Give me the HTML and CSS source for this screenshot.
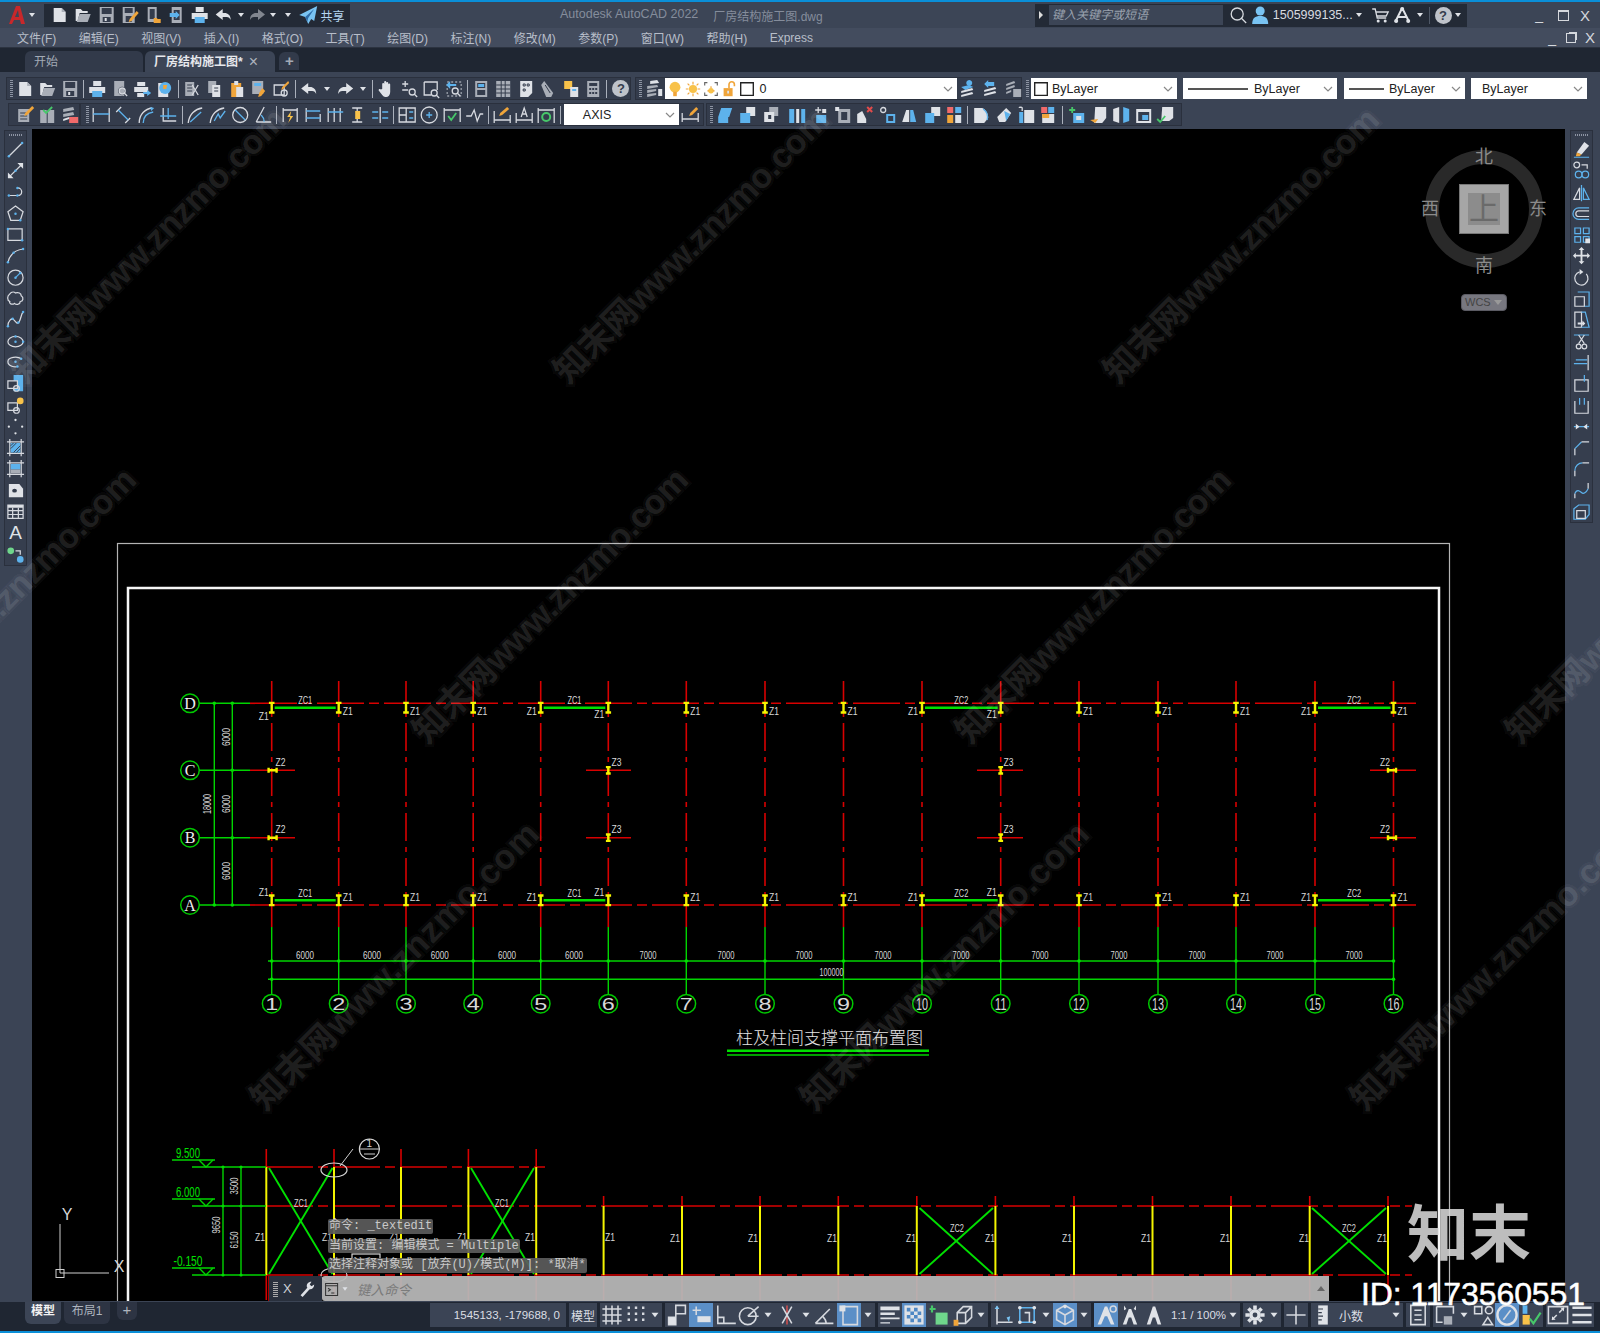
FILE: index.html
```html
<!DOCTYPE html>
<html lang="zh-CN">
<head>
<meta charset="utf-8">
<title>Autodesk AutoCAD 2022 - 厂房结构施工图.dwg</title>
<link rel="stylesheet" href="styles.css">
</head>
<body>
<svg class="defs" aria-hidden="true">
<symbol id="new" viewBox="0 0 20 20"><path class="fw" d="M4 3h8l4 4v10H4z"/><path class="fg" d="M12 3l4 4h-4z"/></symbol>
<symbol id="open" viewBox="0 0 20 20"><path class="fw" d="M3 4h5l2 2h5v2H7l-2 8H3z"/><path class="fg" d="M7 9h11l-3 8H4z"/></symbol>
<symbol id="save" viewBox="0 0 20 20"><path class="fg" d="M3 2h14v16H3z"/><path class="fk" d="M5 3h10v6H5zM6 12h8v5H6z"/><path class="fw" d="M8 13h2v3H8z"/></symbol>
<symbol id="saveas" viewBox="0 0 20 20"><path class="fg" d="M3 2h12v16H3z"/><path class="fk" d="M5 3h8v5H5zM6 11h6v6H6z"/><path class="fo" d="M17 6l2 2-7 8-3 1 1-3z"/></symbol>
<symbol id="sheet" viewBox="0 0 20 20"><path class="fg" d="M4 2h9v15H4z"/><path class="fk" d="M6 4h5v10H6z"/><path class="fo" d="M10 13h3l1 1h3v4h-7z"/></symbol>
<symbol id="phone" viewBox="0 0 20 20"><path class="fg" d="M5 2h10v16H5z"/><path class="fk" d="M7 5h6v10H7z"/><path class="fb" d="M3 8h6V6l4 4-4 4v-2H3z"/></symbol>
<symbol id="print" viewBox="0 0 20 20"><path class="fw" d="M6 2h8v5H6zM2 8h16v6H2z"/><path class="fb" d="M5 12h10v6H5z"/></symbol>
<symbol id="prev" viewBox="0 0 20 20"><path class="fg" d="M4 2h10v15H4z"/><circle class="d" cx="12" cy="12" r="3.5"/><circle class="l" cx="12" cy="12" r="3"/><path class="l" d="M14 14l3 3"/></symbol>
<symbol id="plot" viewBox="0 0 20 20"><path class="fw" d="M5 3h8v4H5zM2 8h14v5H2z"/><path class="fw" d="M5 14h7v4H5z"/><path class="fb" d="M11 13h4v-2l4 3-4 3v-2h-4z"/></symbol>
<symbol id="globe" viewBox="0 0 20 20"><path class="fw" d="M4 4h10v14H4z"/><circle class="fb" cx="11" cy="9" r="6"/><path class="fo" d="M9 6h4l-1 4h-3z"/></symbol>
<symbol id="cut" viewBox="0 0 20 20"><path class="fg" d="M3 3h9v14H3z"/><path class="k" d="M5 6h5M5 9h5M5 12h5"/><path class="l" d="M10 6l6 10M16 6l-6 10"/></symbol>
<symbol id="copy" viewBox="0 0 20 20"><path class="fg" d="M4 2h8v12H4z"/><path class="fw" d="M8 6h8v12H8z"/><path class="k" d="M10 9h4M10 12h4"/></symbol>
<symbol id="paste" viewBox="0 0 20 20"><path class="fo" d="M4 4h10v14H4z"/><path class="fw" d="M7 2h4v4H7zM9 8h7v10H9z"/></symbol>
<symbol id="match" viewBox="0 0 20 20"><path class="fg" d="M3 2h11v13H3z"/><path class="fb" d="M5 4h7v3H5z"/><path class="fo" d="M13 9l3 3-4 5-3 1 1-4z"/></symbol>
<symbol id="block" viewBox="0 0 20 20"><path class="l" d="M3 6h10v10H3z"/><circle class="l" cx="13" cy="14" r="3"/><path class="fo" d="M17 2l1 2-6 6-2 1 1-3z"/></symbol>
<symbol id="undo" viewBox="0 0 20 20"><path class="fw" d="M9 4L2 9.500l7 5.500v-3h4c2 0 3 1 4 3 0-5-3-7-6-7H9z"/></symbol>
<symbol id="redo" viewBox="0 0 20 20"><path class="fw" d="M11 4l7 5.500-7 5.500v-3H7c-2 0-3 1-4 3 0-5 3-7 6-7h2z"/></symbol>
<symbol id="caret" viewBox="0 0 12 20"><path class="fw" d="M3 8h6l-3 4z"/></symbol>
<symbol id="chev" viewBox="0 0 12 12"><path class="ch" d="M2 4l4 4 4-4"/></symbol>
<symbol id="hand" viewBox="0 0 20 20"><path class="fw" d="M6 10V5a1 1 0 012 0V3a1 1 0 012 0v1a1 1 0 012 0v1.500a1 1 0 012 0V13c0 3-2 5-4 5H9c-1 0-2-1-3-2l-3.500-4.500c-.5-1 1-2 2-1z"/></symbol>
<symbol id="zoomr" viewBox="0 0 20 20"><path class="l" d="M6 2v6M3 5h6M3 11h6"/><circle class="l" cx="13" cy="13" r="3"/><path class="l" d="M15 15l3 3"/></symbol>
<symbol id="zoomw" viewBox="0 0 20 20"><path class="l" d="M3 3h13v8M3 3v13h7"/><circle class="l" cx="13" cy="14" r="3"/><path class="l" d="M15 16l3 3"/></symbol>
<symbol id="zoomp" viewBox="0 0 20 20"><path class="da" d="M3 3h14v14H3z"/><path class="fb" d="M2 6l4-4v3h6v2H6v3z"/><circle class="l" cx="11" cy="12" r="3"/><path class="l" d="M13 14l3 3"/></symbol>
<symbol id="propp" viewBox="0 0 20 20"><path class="fg" d="M4 2h12v16H4z"/><path class="fk" d="M6 4h8v5H6z"/><path class="fb" d="M7 5h6v3H7z"/><path class="fk" d="M6 11h8v5H6z"/></symbol>
<symbol id="dcent" viewBox="0 0 20 20"><path class="fg" d="M3 2h14v16H3z"/><path class="k" d="M8 2v16M12 2v16M3 6h14M3 10h14M3 14h14"/></symbol>
<symbol id="tool" viewBox="0 0 20 20"><path class="fw" d="M4 2h12v12l-4 4H4z"/><path class="k" d="M7 5h2v2H7zM7 10h2v2H7zM11 5h2v2h-2z"/></symbol>
<symbol id="sheet2" viewBox="0 0 20 20"><path class="fg" d="M6 2l9 12-2 4H8L3 6z"/><path class="k" d="M7 6l5 8"/></symbol>
<symbol id="markup" viewBox="0 0 20 20"><path class="fy" d="M3 2h8v8H3z"/><path class="fw" d="M9 8h8v10H9z"/><path class="fb" d="M11 10h4v2h-4z"/></symbol>
<symbol id="calc" viewBox="0 0 20 20"><path class="fg" d="M4 2h12v16H4z"/><path class="fk" d="M6 4h8v3H6zM6 9h2v2H6zM9 9h2v2H9zM12 9h2v2h-2zM6 13h2v2H6zM9 13h2v2H9zM12 13h2v2h-2z"/></symbol>
<symbol id="layer" viewBox="0 0 20 20"><path class="fw" d="M6 2l7-1 2 3-9 1z"/><path class="fg" d="M3 7l10-1 1 2-11 2zM3 11l9-1v2l-9 2zM3 15l9-1v2l-9 2z"/><path class="fk" d="M13 9h6v9h-6z"/><path class="fw" d="M14 10h4v7h-4z"/></symbol>
<symbol id="bulb" viewBox="0 0 20 20"><circle class="fy" cx="10" cy="8" r="6"/><path class="fo" d="M8 13h4v5H8z"/></symbol>
<symbol id="sun" viewBox="0 0 20 20"><circle class="fy" cx="10" cy="10" r="4.500"/><path class="o" d="M10 2v3M10 15v3M2 10h3M15 10h3M4 4l2 2M14 14l2 2M4 16l2-2M14 6l2-2"/></symbol>
<symbol id="frozen" viewBox="0 0 20 20"><path class="mk" d="M3 6V3h3M14 3h3v3M3 14v3h3M14 17h3v-3"/><circle class="fy" cx="10" cy="12" r="3"/><path class="o" d="M10 7v2M6 12h2M12 12h2"/></symbol>
<symbol id="lock" viewBox="0 0 20 20"><path class="fo" d="M4 9h10v9H4z"/><path class="lo" d="M10 9V5a3 3 0 016 0v2"/><path class="fw" d="M8 12h2v3H8z"/></symbol>
<symbol id="wsq" viewBox="0 0 20 20"><path class="mk2" d="M3 3h14v14H3z"/></symbol>
<symbol id="lmove" viewBox="0 0 20 20"><path class="fb" d="M3 8l8-2 4 2-8 3z"/><path class="fb" d="M11 1a3 3 0 10.100 0z"/><path class="fw" d="M3 12l11-3 1 2-12 3zM3 16l11-3 1 2-12 3z"/></symbol>
<symbol id="lprev" viewBox="0 0 20 20"><path class="fb" d="M3 5l4-4v2h6v4H7v2z"/><path class="fw" d="M3 11l11-3 1 2-12 3zM3 15l11-3 1 2-12 3z"/></symbol>
<symbol id="llock" viewBox="0 0 20 20"><path class="fg" d="M3 5l8-3 1 2-9 3zM3 9l8-3 1 2-9 3zM3 13l5-2v2l-5 2z"/><path class="fg" d="M10 10h8v8h-8z"/><path class="k" d="M12 10V8a2 2 0 014 0v2"/></symbol>
<symbol id="note" viewBox="0 0 20 20"><path class="fg" d="M3 4h11v13H3z"/><path class="k" d="M5 8h7M5 11h7M5 14h7"/><path class="fo" d="M17 1l2 2-7 7-3 1 1-3z"/></symbol>
<symbol id="notechk" viewBox="0 0 20 20"><path class="fg" d="M3 5h14v13H3z"/><path class="k" d="M10 5v13"/><path class="gr" d="M6 5l3 3 6-6"/></symbol>
<symbol id="notex" viewBox="0 0 20 20"><path class="fg" d="M3 4l10-2 1 3-11 2zM3 9l10-2 1 3-11 2z"/><path class="fr" d="M9 12h9v6H9z"/><path class="fw" d="M3 14l6-2v2l-6 2z"/></symbol>
<symbol id="dimlin" viewBox="0 0 20 20"><path class="l" d="M2 3v14M18 3v14"/><path class="bl" d="M2 9h16"/></symbol>
<symbol id="dimali" viewBox="0 0 20 20"><path class="l" d="M3 7l5-5M12 18l5-5"/><path class="bl" d="M5 5l10 10"/></symbol>
<symbol id="dimarc" viewBox="0 0 20 20"><path class="l" d="M3 18C3 9 9 4 16 3"/><path class="bl" d="M7 18C7 12 11 8 17 7"/><path class="fb" d="M14 2l4 1-3 3z"/></symbol>
<symbol id="dimord" viewBox="0 0 20 20"><path class="l" d="M5 3v13h13"/><path class="bl" d="M10 3v11M2 11h16"/></symbol>
<symbol id="dimrad" viewBox="0 0 20 20"><path class="l" d="M2 18C3 9 9 4 16 3"/><path class="bl" d="M4 17L15 7"/></symbol>
<symbol id="dimjog" viewBox="0 0 20 20"><path class="l" d="M2 18C3 9 9 4 16 3"/><path class="bl" d="M6 16l4-7 2 4 5-7"/></symbol>
<symbol id="dimdia" viewBox="0 0 20 20"><circle class="l" cx="10" cy="10" r="7.500"/><path class="bl" d="M5 5l10 10"/></symbol>
<symbol id="dimang" viewBox="0 0 20 20"><path class="l" d="M3 17h15M3 17L11 2"/><path class="bl" d="M11 17c0-3-1-5-3-7"/></symbol>
<symbol id="dimqk" viewBox="0 0 20 20"><path class="l" d="M3 3v14M17 3v14M3 5h14"/><path class="fy" d="M11 6l-4 6h3l-2 6 5-7h-3z"/></symbol>
<symbol id="dimbase" viewBox="0 0 20 20"><path class="l" d="M3 3v14M17 9v8"/><path class="bl" d="M3 6h14M3 13h14"/></symbol>
<symbol id="dimcont" viewBox="0 0 20 20"><path class="l" d="M3 3v14M9 3v14M15 3v14"/><path class="bl" d="M3 7h15"/></symbol>
<symbol id="dimtxt" viewBox="0 0 20 20"><path class="l" d="M5 3h10M5 17h10M10 3v14"/><path class="fy" d="M8 6h5v8H8z"/></symbol>
<symbol id="dimspc" viewBox="0 0 20 20"><path class="l" d="M10 2v16"/><path class="bl" d="M2 7h6M12 7h6M2 13h6M12 13h6"/></symbol>
<symbol id="tol" viewBox="0 0 20 20"><path class="l" d="M2 3h16v14H2zM9 3v14M2 10h7"/><path class="bl" d="M12 7h4M12 13h4"/></symbol>
<symbol id="cmark" viewBox="0 0 20 20"><circle class="l" cx="10" cy="10" r="8"/><path class="bl" d="M10 7v6M7 10h6"/></symbol>
<symbol id="insp" viewBox="0 0 20 20"><path class="l" d="M2 3v14M18 3v14M2 5h16"/><path class="gr" d="M6 11l3 4 5-7"/></symbol>
<symbol id="jog" viewBox="0 0 20 20"><path class="l" d="M2 11l5 0 3-6 3 11 3-7h3"/></symbol>
<symbol id="dted" viewBox="0 0 20 20"><path class="l" d="M2 18V6M18 18V10M2 15h16"/><path class="fo" d="M15 2l2 2-7 6-3 1 1-3z"/></symbol>
<symbol id="dtxa" viewBox="0 0 20 20"><path class="l" d="M2 18V8M18 18V8M2 15h16M7 12l3-9 3 9M8 9h4"/></symbol>
<symbol id="dupd" viewBox="0 0 20 20"><path class="l" d="M2 18V3M18 18V3M2 5h16"/><circle class="grw" cx="10" cy="12" r="4"/></symbol>
<symbol id="dsty" viewBox="0 0 20 20"><path class="l" d="M2 17V8M18 17V8M2 14h16"/><path class="fo" d="M16 2l2 2-6 6-3 1 1-3z"/></symbol>
<symbol id="s1" viewBox="0 0 20 20"><path class="fb" d="M6 3h11l-3 9H3z"/><path class="fb" d="M3 12h10v6H3z"/></symbol>
<symbol id="s2" viewBox="0 0 20 20"><path class="fw" d="M9 2h9v9H9z"/><path class="fb" d="M3 8h10v10H3z"/></symbol>
<symbol id="s3" viewBox="0 0 20 20"><path class="fg" d="M9 2h9v9H9z"/><path class="fw" d="M4 7h10v10H4z"/><path class="fk" d="M8 10h3v4H8z"/></symbol>
<symbol id="s4" viewBox="0 0 20 20"><path class="fb" d="M2 4h5v14H2z"/><path class="fw" d="M9 4h3v14H9z"/><path class="fb" d="M14 4h4v14h-4z"/></symbol>
<symbol id="s5" viewBox="0 0 20 20"><path class="l" d="M8 2v6M5 5h6"/><path class="fw" d="M12 4h4v4h-4z"/><path class="fb" d="M6 10h10v8H6z"/></symbol>
<symbol id="s6" viewBox="0 0 20 20"><path class="fg" d="M6 4h12v14H6z"/><path class="fk" d="M9 7h6v8H9z"/><path class="fw" d="M3 2h4v4H3z"/></symbol>
<symbol id="s7" viewBox="0 0 20 20"><path class="fw" d="M3 18V9l5-3 4 8v4z"/><path class="x" d="M13 2l5 5M18 2l-5 5"/></symbol>
<symbol id="s8" viewBox="0 0 20 20"><circle class="l" cx="6" cy="5" r="2.500"/><path class="fb" d="M9 9h9v9H9z"/><path class="fk" d="M11 11h5v5h-5z"/></symbol>
<symbol id="s9" viewBox="0 0 20 20"><path class="fw" d="M3 17L7 5h3v12z"/><path class="fb" d="M11 5h3l3 12h-6z"/></symbol>
<symbol id="s10" viewBox="0 0 20 20"><path class="fw" d="M9 2h9v9H9z"/><path class="fb" d="M3 8h9v10H3z"/></symbol>
<symbol id="s11" viewBox="0 0 20 20"><path class="fr" d="M3 2h6v6H3z"/><path class="fb" d="M11 2h6v6h-6z"/><path class="fo" d="M3 10h6v8H3z"/><path class="fw" d="M11 10h6v8h-6z"/></symbol>
<symbol id="s12" viewBox="0 0 20 20"><path class="fw" d="M3 3h8c4 2 6 6 6 10l-4 5H3z"/><path class="bl" d="M12 4c3 2 5 6 4 11"/></symbol>
<symbol id="s13" viewBox="0 0 20 20"><path class="fw" d="M3 12l9-9 5 5-6 9H5z"/><path class="fb" d="M10 6l6 3-4 7z"/></symbol>
<symbol id="s14" viewBox="0 0 20 20"><path class="l" d="M3 3c0-1 3-1 3 0v3"/><path class="fb" d="M3 7h4v11H3z"/><path class="fw" d="M8 5h10v13H8z"/></symbol>
<symbol id="s15" viewBox="0 0 20 20"><path class="fr" d="M3 2h6v6H3z"/><path class="fb" d="M10 2h6v6h-6z"/><path class="fw" d="M4 9h12v9H4z"/><path class="fo" d="M4 9h7v4H4z"/></symbol>
<symbol id="s16" viewBox="0 0 20 20"><path class="gr" d="M3 5h6M6 2v6"/><path class="fb" d="M7 8h11v10H7z"/><path class="fw" d="M10 11h5v4h-5z"/></symbol>
<symbol id="s17" viewBox="0 0 20 20"><path class="fw" d="M7 2h11v11l-4 5H6z"/><path class="fo" d="M2 15l8-1-3 4z"/></symbol>
<symbol id="s18" viewBox="0 0 20 20"><path class="fw" d="M2 4l6-2v16l-6-2z"/><path class="fb" d="M12 2l6 2v12l-6 2z"/></symbol>
<symbol id="s19" viewBox="0 0 20 20"><path class="fw" d="M3 4h15v14H3z"/><path class="fk" d="M5 7h11v9H5z"/><path class="fb" d="M9 10h6v5H9z"/></symbol>
<symbol id="s20" viewBox="0 0 20 20"><path class="fw" d="M7 2h11v11l-4 3H6z"/><path class="gr" d="M2 14l3 3 5-6"/></symbol>
<symbol id="lline" viewBox="0 0 20 20"><path class="l" d="M3 17L17 3"/><circle class="dot" cx="3" cy="17" r="1.300"/><circle class="dot" cx="17" cy="3" r="1.300"/></symbol>
<symbol id="lxline" viewBox="0 0 20 20"><path class="l" d="M4 16L16 4"/><path class="fw" d="M12 2h6v6zM2 12l6 6H2z"/><circle class="dot" cx="10" cy="10" r="1.300"/></symbol>
<symbol id="lpline" viewBox="0 0 20 20"><path class="l" d="M3 13h9c6 0 6-8 0-8"/><circle class="dot" cx="3" cy="13" r="1.300"/><circle class="dot" cx="12" cy="13" r="1.300"/><circle class="dot" cx="12" cy="5" r="1.300"/></symbol>
<symbol id="lpoly" viewBox="0 0 20 20"><path class="l" d="M10 2l8 6-3 9H5L2 8z"/><circle class="dot" cx="10" cy="10" r="1.300"/><circle class="dot" cx="15" cy="17" r="1.300"/></symbol>
<symbol id="lrect" viewBox="0 0 20 20"><path class="l" d="M2 4h15v12H2z"/><circle class="dot" cx="2" cy="4" r="1.300"/><circle class="dot" cx="17" cy="16" r="1.300"/></symbol>
<symbol id="larc" viewBox="0 0 20 20"><path class="l" d="M2 17C4 9 10 4 18 3"/><circle class="dot" cx="2" cy="17" r="1.300"/><circle class="dot" cx="18" cy="3" r="1.300"/><circle class="dot" cx="8" cy="7" r="1.300"/></symbol>
<symbol id="lcirc" viewBox="0 0 20 20"><circle class="l" cx="10" cy="10" r="8"/><path class="bl" d="M10 10l5-5"/><circle class="dot" cx="10" cy="10" r="1.300"/><circle class="dot" cx="15" cy="5" r="1.300"/></symbol>
<symbol id="lcloud" viewBox="0 0 20 20"><path class="l" d="M4 5c2-3 5-2 6-1 3-1 6 0 6 3 3 2 2 6-1 6 0 3-4 4-6 2-3 2-6 0-5-2-3-1-3-6 0-8z"/></symbol>
<symbol id="lspl" viewBox="0 0 20 20"><path class="l" d="M2 17c0-6 4-9 6-7s4 6 6 2 2-8 4-10"/><circle class="dot" cx="2" cy="17" r="1.300"/><circle class="dot" cx="7" cy="9" r="1.300"/><circle class="dot" cx="13" cy="13" r="1.300"/><circle class="dot" cx="18" cy="2" r="1.300"/></symbol>
<symbol id="lell" viewBox="0 0 20 20"><ellipse class="l" cx="10" cy="10" rx="8" ry="5.500"/><circle class="dot" cx="10" cy="10" r="1.300"/><circle class="dot" cx="18" cy="10" r="1.300"/><circle class="dot" cx="10" cy="4.500" r="1.300"/></symbol>
<symbol id="lella" viewBox="0 0 20 20"><path class="l" d="M16 6c-4-3-14-2-14 3s8 6 10 5"/><circle class="dot" cx="10" cy="9" r="1.300"/><circle class="dot" cx="16" cy="6" r="1.300"/><circle class="dot" cx="12" cy="14" r="1.300"/></symbol>
<symbol id="lins" viewBox="0 0 20 20"><path class="fb" d="M8 1h10v17H8z"/><path class="fk" d="M2 7h10v8H2z"/><path class="l" d="M2 7h10v8H2z"/><circle class="l" cx="11" cy="15" r="3"/></symbol>
<symbol id="lblk" viewBox="0 0 20 20"><path class="l" d="M2 7h10v8H2z"/><circle class="l" cx="11" cy="15" r="3"/><circle class="fy" cx="15" cy="5" r="3.500"/></symbol>
<symbol id="lpts" viewBox="0 0 20 20"><circle class="fw" cx="10" cy="3" r="1.200"/><circle class="fw" cx="3" cy="10" r="1.200"/><circle class="fw" cx="10" cy="17" r="1.200"/><circle class="fw" cx="17" cy="10" r="1.200"/></symbol>
<symbol id="lhat" viewBox="0 0 20 20"><path class="l" d="M1 4h18M1 16h18M4 1v18M16 1v18"/><path class="fb" d="M5 5h10v10H5z"/><path class="k" d="M5 11l6-6M8 15l7-7M5 8l3-3M11 15l4-4"/></symbol>
<symbol id="lgrad" viewBox="0 0 20 20"><path class="l" d="M1 4h18M1 16h18M4 1v18M16 1v18"/><path class="fb" d="M5 5h10v6H5z"/><path class="fg" d="M5 11h10v4H5z"/></symbol>
<symbol id="lreg" viewBox="0 0 20 20"><path class="fw" d="M3 3h11l4 5v9H3z"/><ellipse class="fk" cx="9" cy="10" rx="2.500" ry="2"/></symbol>
<symbol id="ltab" viewBox="0 0 20 20"><path class="fw" d="M2 3h16v3H2z"/><path class="l" d="M2 3h16v14H2zM2 9h16M2 13h16M7 6v11M13 6v11"/></symbol>
<symbol id="ladd" viewBox="0 0 20 20"><circle class="fgr" cx="5" cy="6" r="3.500"/><circle class="fb" cx="15" cy="15" r="3.500"/><path class="l" d="M10 6h5v4"/></symbol>
<symbol id="rer" viewBox="0 0 20 20"><path class="fw" d="M13 2l5 4-8 9-5-2z"/><path class="fo" d="M5 13l5 2-2 2H4z"/><path class="bl" d="M2 18h16"/></symbol>
<symbol id="rcopy" viewBox="0 0 20 20"><circle class="l" cx="5" cy="4" r="3"/><path class="l" d="M10 4h6v4"/><circle class="bl" cx="7" cy="14" r="3.500"/><circle class="bl" cx="14" cy="14" r="3.500"/></symbol>
<symbol id="rmir" viewBox="0 0 20 20"><path class="l" d="M2 17L8 5v12z"/><path class="bl" d="M12 5l6 12h-6zM10 2v17"/></symbol>
<symbol id="roff" viewBox="0 0 20 20"><path class="bl" d="M18 4H7a6 6 0 000 12h11"/><path class="l" d="M18 7H7a3 3 0 000 6h11"/></symbol>
<symbol id="rarr" viewBox="0 0 20 20"><path class="bl" d="M3 3h6v6H3zM12 3h6v6h-6zM3 12h6v6H3z"/><path class="bl" d="M12 12h6v6h-6z"/><path class="fw" d="M14 14h5v5h-5z"/></symbol>
<symbol id="rmov" viewBox="0 0 20 20"><path class="fw" d="M10 1l3 3h-2v5h5V7l3 3-3 3v-2h-5v5h2l-3 3-3-3h2v-5H4v2l-3-3 3-3v2h5V4H7z"/></symbol>
<symbol id="rrot" viewBox="0 0 20 20"><path class="l" d="M8 4a7 7 0 107 2"/><path class="fw" d="M8 1l4 3-4 3z"/></symbol>
<symbol id="rsca" viewBox="0 0 20 20"><path class="bl" d="M6 3h12v15H13"/><path class="l" d="M3 8h10v10H3z"/></symbol>
<symbol id="rstr" viewBox="0 0 20 20"><path class="l" d="M3 2h7v16H3z"/><path class="bl" d="M10 2h4l4 16h-8"/><path class="fw" d="M6 13h5v-2l3 3-3 3v-2H6z"/></symbol>
<symbol id="rtrim" viewBox="0 0 20 20"><path class="bl" d="M2 3h16"/><path class="l" d="M7 3l6 9M13 3l-6 9"/><circle class="l" cx="7" cy="15" r="2.500"/><circle class="l" cx="13" cy="15" r="2.500"/></symbol>
<symbol id="rext" viewBox="0 0 20 20"><path class="l" d="M17 2v16"/><path class="bl" d="M2 11h14M4 7h12"/></symbol>
<symbol id="rbrk" viewBox="0 0 20 20"><path class="l" d="M3 6h14v12H3z"/><path class="bl" d="M13 1v7"/></symbol>
<symbol id="rbrk2" viewBox="0 0 20 20"><path class="l" d="M3 5v13h14V5"/><path class="bl" d="M8 2v7M13 2v7"/></symbol>
<symbol id="rjoin" viewBox="0 0 20 20"><path class="bl" d="M2 10h16"/><path class="fw" d="M4 7l4 3-4 3zM16 7l-4 3 4 3z"/></symbol>
<symbol id="rcham" viewBox="0 0 20 20"><path class="l" d="M3 18V11"/><path class="bl" d="M3 11l7-7"/><path class="l" d="M10 4h8"/></symbol>
<symbol id="rfil" viewBox="0 0 20 20"><path class="l" d="M3 18v-6"/><path class="bl" d="M3 12c0-5 4-8 8-8"/><path class="l" d="M11 4h7"/></symbol>
<symbol id="rblend" viewBox="0 0 20 20"><path class="l" d="M3 18v-5M17 2v6"/><path class="bl" d="M3 13c2-5 5-3 7-1s5 0 7-4"/></symbol>
<symbol id="rexp" viewBox="0 0 20 20"><path class="bl" d="M2 7l5-4h11v10l-4 5H2z"/><path class="l" d="M5 9h9v8H5z"/></symbol>
<symbol id="search" viewBox="0 0 20 20"><circle class="l" cx="9" cy="9" r="6"/><path class="l" d="M13 13l5 5"/></symbol>
<symbol id="user" viewBox="0 0 20 20"><circle class="fbl" cx="10" cy="6" r="4.500"/><path class="fbl" d="M2 19c0-6 3-8 8-8s8 2 8 8z"/></symbol>
<symbol id="cart" viewBox="0 0 20 20"><path class="l" d="M2 4h3l2 9h9M6 7h12l-2 4H7"/><circle class="fw" cx="8" cy="16" r="1.500"/><circle class="fw" cx="15" cy="16" r="1.500"/></symbol>
<symbol id="alogo" viewBox="0 0 20 20"><path class="l2" d="M10 3L3 17M10 3l7 14M6 12h8"/><circle class="fw" cx="10" cy="4" r="2"/><circle class="fw" cx="4" cy="16" r="2"/><circle class="fw" cx="16" cy="16" r="2"/></symbol>
<symbol id="share" viewBox="0 0 20 20"><path class="fbl" d="M19 1L1 10l6 2 3 7 3-5 3 2z"/><path class="fk2" d="M7 12l9-8-6 9-1 4z"/></symbol>
<symbol id="acad" viewBox="0 0 18 22"><path class="fred" d="M8 2h4l5 18h-4l-1-4H6l-2 4H1zM10 6L7 13h4z"/></symbol>
<symbol id="tty" viewBox="0 0 20 20"><path class="tk" d="M2 3h15v15H2zM2 6h15M5 9l3 2-3 2M9 15h4"/></symbol>
<symbol id="wrench" viewBox="0 0 20 20"><path class="l3" d="M4 18l8-9"/><path class="fw" d="M10 8c-1-3 1-6 5-6l-2 3 2 2 3-2c0 4-3 6-6 5z"/></symbol>
<symbol id="grid" viewBox="0 0 20 20"><path class="l" d="M5 2v16M10 2v16M15 2v16M2 5h16M2 10h16M2 15h16"/></symbol>
<symbol id="dots" viewBox="0 0 20 20"><path class="dash" d="M4 3v14M10 3v14M16 3v14"/></symbol>
<symbol id="infer" viewBox="0 0 20 20"><path class="l" d="M9 2h8v7H9zM9 5v7H3v6h6v-6"/><path class="fw" d="M3 12h6v6H3z"/></symbol>
<symbol id="dyn" viewBox="0 0 20 20"><path class="l" d="M6 3v7M3 6h7"/><path class="fw" d="M7 11h11v5H7z"/></symbol>
<symbol id="ortho" viewBox="0 0 20 20"><path class="l" d="M4 2v15h15M4 12h5v5"/></symbol>
<symbol id="polar" viewBox="0 0 20 20"><circle class="l" cx="9" cy="11" r="7"/><path class="l" d="M9 11l9-8M9 11h9"/></symbol>
<symbol id="osnap" viewBox="0 0 20 20"><path class="x2" d="M10 2v16"/><path class="l" d="M6 3l8 14M14 3L6 17"/></symbol>
<symbol id="otrk" viewBox="0 0 20 20"><path class="l" d="M2 17L14 5M2 17h15"/><path class="l" d="M11 17c0-3-1-4-3-6"/></symbol>
<symbol id="dynin" viewBox="0 0 20 20"><path class="l" d="M5 3h12v15H5z"/><path class="fw" d="M2 2h5v5H2z"/></symbol>
<symbol id="lwt" viewBox="0 0 20 20"><path class="fw" d="M2 3h16v3H2zM2 8h12v2H2zM2 12h16v1.500H2zM2 16h8v1H2z"/></symbol>
<symbol id="transp" viewBox="0 0 20 20"><path class="fw" d="M2 2h16v16H2z"/><path class="fbd" d="M4 4h3v3H4zM10 4h3v3h-3zM7 7h3v3H7zM13 7h3v3h-3zM4 10h3v3H4zM10 10h3v3h-3zM7 13h3v3H7zM13 13h3v3h-3z"/></symbol>
<symbol id="qsel" viewBox="0 0 20 20"><path class="gr" d="M3 5h5M5 2v6"/><path class="fgr" d="M8 8h10v10H8z"/></symbol>
<symbol id="cyc" viewBox="0 0 20 20"><path class="l" d="M6 8l5-5h7v9l-5 5H6zM6 8h7v9M13 8l5-5"/><path class="fo" d="M3 14h4v5H3z"/></symbol>
<symbol id="axes" viewBox="0 0 20 20"><path class="l" d="M5 18V3M5 16h13"/><path class="fbl" d="M3 5l2-3 2 3zM13 12l3-1-1 5z"/></symbol>
<symbol id="gizmo" viewBox="0 0 20 20"><path class="bl" d="M4 4h12v12H4z"/><path class="dot2" d="M4 4h.100M16 4h.100M4 16h.100M16 16h.100"/><path class="l" d="M8 8h4v8"/></symbol>
<symbol id="box3d" viewBox="0 0 20 20"><path class="l" d="M10 2l7 4v8l-7 4-7-4V6zM3 6l7 4 7-4M10 10v8"/><circle class="fw" cx="10" cy="3" r="1.500"/></symbol>
<symbol id="anno" viewBox="0 0 20 20"><path class="fw" d="M9 3h2l6 15h-3l-3-7h-2l-3 7H3z"/><circle class="l" cx="16" cy="5" r="2.500"/></symbol>
<symbol id="anno2" viewBox="0 0 20 20"><path class="fw" d="M9 5h2l5 13h-3l-2-6h-2l-2 6H4z"/><path class="fw" d="M5 2l2 3-2 1zM15 2v4l-2-1z"/></symbol>
<symbol id="anno3" viewBox="0 0 20 20"><path class="fw" d="M9 3h2l5 15h-3l-2-6h-2l-2 6H4z"/></symbol>
<symbol id="gear" viewBox="0 0 20 20"><circle class="gearc" cx="10" cy="10" r="5"/><path class="gearl" d="M10 2v3M10 15v3M2 10h3M15 10h3M4.500 4.500l2 2M13.500 13.500l2 2M4.500 15.500l2-2M13.500 6.500l2-2"/><circle class="gearh" cx="10" cy="10" r="2"/></symbol>
<symbol id="plus" viewBox="0 0 20 20"><path class="l" d="M10 2v16M2 10h16"/></symbol>
<symbol id="ruler" viewBox="0 0 20 20"><path class="fw" d="M6 2h8v16H6z"/><path class="k" d="M6 5h4M6 8h3M6 11h4M6 14h3"/></symbol>
<symbol id="prop2" viewBox="0 0 20 20"><path class="l" d="M4 2h12v16H4zM7 6h6M7 10h6M7 14h6"/></symbol>
<symbol id="lockui" viewBox="0 0 20 20"><path class="l" d="M3 3h14v6M3 3v13h5"/><path class="fg" d="M9 11h7v7H9z"/></symbol>
<symbol id="iso" viewBox="0 0 20 20"><path class="l" d="M3 3h6v6H3zM10 18l4-6 4 6z"/><circle class="l" cx="15" cy="6" r="3"/></symbol>
<symbol id="perf" viewBox="0 0 20 20"><circle class="l2" cx="10" cy="10" r="8"/><path class="l" d="M7 14l6-8"/></symbol>
<symbol id="chk" viewBox="0 0 20 20"><path class="fb" d="M3 2h4v7H3z"/><path class="fy" d="M3 10h6v8H3z"/><path class="gr" d="M9 13l3 4 6-9"/></symbol>
<symbol id="clean" viewBox="0 0 20 20"><path class="l" d="M2 3h16v14H2z"/><path class="l" d="M5 14l4-4M11 8l4-4"/><path class="fw" d="M5 11v3h3zM15 7V4h-3z"/></symbol>
<symbol id="menu" viewBox="0 0 20 20"><path class="fw" d="M2 3h16v2H2zM2 9h16v2H2zM2 15h16v2H2z"/></symbol>
</svg>

<div class="topline"></div>
<header class="titlebar">
  <div class="logo"><svg class="lg"><use href="#acad"/></svg><svg class="c"><use href="#caret"/></svg></div>
  <div class="qat">
    <svg class="i q"><use href="#new"/></svg><svg class="i q"><use href="#open"/></svg><svg class="i q"><use href="#save"/></svg><svg class="i q"><use href="#saveas"/></svg><svg class="i q"><use href="#sheet"/></svg><svg class="i q"><use href="#phone"/></svg><svg class="i q"><use href="#print"/></svg><svg class="i q"><use href="#undo"/></svg><svg class="c"><use href="#caret"/></svg><svg class="i dim"><use href="#redo"/></svg><svg class="c"><use href="#caret"/></svg><svg class="c wide"><use href="#caret"/></svg><svg class="i shr"><use href="#share"/></svg><span class="sharetx">共享</span>
  </div>
  <div class="doctitle"><span>Autodesk AutoCAD 2022</span><span class="dwg">厂房结构施工图.dwg</span></div>
  <div class="hub">
    <span class="hubarrow"></span>
    <span class="hubsearch">键入关键字或短语</span>
    <svg class="i hubs"><use href="#search"/></svg><svg class="i"><use href="#user"/></svg>
    <span class="hubuser">1505999135...</span><svg class="c"><use href="#caret"/></svg>
    <svg class="i hubgap"><use href="#cart"/></svg><svg class="i"><use href="#alogo"/></svg><svg class="c"><use href="#caret"/></svg>
    <span class="sep"></span><span class="hlp">?</span><svg class="c"><use href="#caret"/></svg>
  </div>
  <div class="wins"><span class="min">_</span><span class="max"></span><span class="cls">X</span></div>
</header>
<nav class="menubar">
  <span>文件(F)</span><span>编辑(E)</span><span>视图(V)</span><span>插入(I)</span><span>格式(O)</span><span>工具(T)</span><span>绘图(D)</span><span>标注(N)</span><span>修改(M)</span><span>参数(P)</span><span>窗口(W)</span><span>帮助(H)</span><span>Express</span>
  <div class="docwins"><span class="min">_</span><span class="rest"></span><span class="cls">X</span></div>
</nav>
<div class="tabstrip">
  <span class="tab">开始</span>
  <span class="tab on">厂房结构施工图*<b class="tabx">×</b></span>
  <span class="tab add">+</span>
</div>
<section class="tools">
  <div class="row r1">
    <div class="tb t1"><span class="grip"></span>
      <svg class="i"><use href="#new"/></svg><svg class="i"><use href="#open"/></svg><svg class="i"><use href="#save"/></svg><span class="sep"></span>
      <svg class="i"><use href="#print"/></svg><svg class="i"><use href="#prev"/></svg><svg class="i"><use href="#plot"/></svg><svg class="i"><use href="#globe"/></svg><span class="sep"></span>
      <svg class="i"><use href="#cut"/></svg><svg class="i"><use href="#copy"/></svg><svg class="i"><use href="#paste"/></svg><svg class="i"><use href="#match"/></svg><svg class="i"><use href="#block"/></svg><span class="sep"></span>
      <svg class="i"><use href="#undo"/></svg><svg class="c"><use href="#caret"/></svg><svg class="i"><use href="#redo"/></svg><svg class="c"><use href="#caret"/></svg><span class="sep"></span>
      <svg class="i"><use href="#hand"/></svg><svg class="i"><use href="#zoomr"/></svg><svg class="i"><use href="#zoomw"/></svg><svg class="i"><use href="#zoomp"/></svg><span class="sep"></span>
      <svg class="i"><use href="#propp"/></svg><svg class="i"><use href="#dcent"/></svg><svg class="i"><use href="#tool"/></svg><svg class="i"><use href="#sheet2"/></svg><svg class="i"><use href="#markup"/></svg><svg class="i"><use href="#calc"/></svg><span class="sep"></span>
      <span class="hlp tbh">?</span>
    </div>
    <div class="tb t2"><span class="grip"></span><svg class="i"><use href="#layer"/></svg>
      <div class="combo layerc"><svg class="li"><use href="#bulb"/></svg><svg class="li"><use href="#sun"/></svg><svg class="li"><use href="#frozen"/></svg><svg class="li"><use href="#lock"/></svg><svg class="li"><use href="#wsq"/></svg><span class="zero">0</span><svg class="chev"><use href="#chev"/></svg></div>
      <svg class="i"><use href="#lmove"/></svg><svg class="i"><use href="#lprev"/></svg><svg class="i"><use href="#llock"/></svg>
    </div>
    <span class="grip solo"></span>
    <div class="combo c1"><svg class="li"><use href="#wsq"/></svg><span>ByLayer</span><svg class="chev"><use href="#chev"/></svg></div>
    <div class="combo c2"><i class="ln"></i><span>ByLayer</span><svg class="chev"><use href="#chev"/></svg></div>
    <div class="combo c3"><i class="ln"></i><span>ByLayer</span><svg class="chev"><use href="#chev"/></svg></div>
    <div class="combo c4"><span>ByLayer</span><svg class="chev"><use href="#chev"/></svg></div>
  </div>
  <div class="row r2">
    <div class="tb t3"><svg class="i"><use href="#note"/></svg><svg class="i"><use href="#notechk"/></svg><svg class="i"><use href="#notex"/></svg></div>
    <div class="tb t4"><span class="grip"></span>
      <svg class="i"><use href="#dimlin"/></svg><svg class="i"><use href="#dimali"/></svg><svg class="i"><use href="#dimarc"/></svg><svg class="i"><use href="#dimord"/></svg><span class="sep"></span>
      <svg class="i"><use href="#dimrad"/></svg><svg class="i"><use href="#dimjog"/></svg><svg class="i"><use href="#dimdia"/></svg><svg class="i"><use href="#dimang"/></svg><span class="sep"></span>
      <svg class="i"><use href="#dimqk"/></svg><svg class="i"><use href="#dimbase"/></svg><svg class="i"><use href="#dimcont"/></svg><svg class="i"><use href="#dimtxt"/></svg><svg class="i"><use href="#dimspc"/></svg><span class="sep"></span>
      <svg class="i"><use href="#tol"/></svg><svg class="i"><use href="#cmark"/></svg><svg class="i"><use href="#insp"/></svg><svg class="i"><use href="#jog"/></svg><span class="sep"></span>
      <svg class="i"><use href="#dted"/></svg><svg class="i"><use href="#dtxa"/></svg><svg class="i"><use href="#dupd"/></svg><span class="sep"></span>
      <div class="combo axis"><span>AXIS</span><svg class="chev"><use href="#chev"/></svg></div>
      <svg class="i"><use href="#dsty"/></svg>
    </div>
    <div class="tb t5"><span class="grip"></span>
      <svg class="i"><use href="#s1"/></svg><svg class="i"><use href="#s2"/></svg><svg class="i"><use href="#s3"/></svg><svg class="i sh"><use href="#s4"/></svg><svg class="i"><use href="#s5"/></svg><svg class="i"><use href="#s6"/></svg><svg class="i"><use href="#s7"/></svg><svg class="i"><use href="#s8"/></svg><svg class="i"><use href="#s9"/></svg><svg class="i"><use href="#s10"/></svg><svg class="i"><use href="#s11"/></svg><span class="sep"></span>
      <svg class="i"><use href="#s12"/></svg><svg class="i"><use href="#s13"/></svg><svg class="i"><use href="#s14"/></svg><svg class="i"><use href="#s15"/></svg><span class="sep"></span>
      <svg class="i"><use href="#s16"/></svg><svg class="i"><use href="#s17"/></svg><svg class="i"><use href="#s18"/></svg><svg class="i"><use href="#s19"/></svg><svg class="i"><use href="#s20"/></svg>
    </div>
  </div>
</section>
<main class="work">
  <aside class="dock dl">
    <div class="vtb"><span class="vgrip"></span>
      <svg class="v"><use href="#lline"/></svg><svg class="v"><use href="#lxline"/></svg><svg class="v"><use href="#lpline"/></svg><svg class="v"><use href="#lpoly"/></svg><svg class="v"><use href="#lrect"/></svg><svg class="v"><use href="#larc"/></svg><svg class="v"><use href="#lcirc"/></svg><svg class="v"><use href="#lcloud"/></svg><svg class="v"><use href="#lspl"/></svg><svg class="v"><use href="#lell"/></svg><svg class="v"><use href="#lella"/></svg><svg class="v"><use href="#lins"/></svg><svg class="v"><use href="#lblk"/></svg><svg class="v"><use href="#lpts"/></svg><svg class="v"><use href="#lhat"/></svg><svg class="v"><use href="#lgrad"/></svg><svg class="v"><use href="#lreg"/></svg><svg class="v"><use href="#ltab"/></svg><span class="v va">A</span><svg class="v"><use href="#ladd"/></svg>
    </div>
  </aside>
  <div class="canvas">
    <svg id="cad" class="cad" viewBox="32 129 1533 1172" aria-label="柱及柱间支撑平面布置图"></svg>
    <div class="vcube">
      <div class="ring"></div>
      <div class="face"><div class="inner">上</div></div>
      <span class="dir n">北</span><span class="dir w">西</span><span class="dir e">东</span><span class="dir s">南</span>
    </div>
    <div class="wcs">WCS<i class="wcsc"></i></div>
    <div class="history">
      <span>命令: _textedit</span>
      <span>当前设置: 编辑模式 = Multiple</span>
      <span>选择注释对象或 [放弃(U)/模式(M)]: *取消*</span>
    </div>
    <div class="cmd">
      <div class="cmdl"><span class="cgrip"></span><span class="cx">X</span><svg class="cw"><use href="#wrench"/></svg></div>
      <div class="cmdi"><svg class="ct"><use href="#tty"/></svg><svg class="c dk"><use href="#caret"/></svg><span class="ph">键入命令</span><span class="up"></span></div>
    </div>
  </div>
  <aside class="dock dr">
    <div class="vtb"><span class="vgrip"></span>
      <svg class="v"><use href="#rer"/></svg><svg class="v"><use href="#rcopy"/></svg><svg class="v"><use href="#rmir"/></svg><svg class="v"><use href="#roff"/></svg><svg class="v"><use href="#rarr"/></svg><svg class="v"><use href="#rmov"/></svg><svg class="v"><use href="#rrot"/></svg><svg class="v"><use href="#rsca"/></svg><svg class="v"><use href="#rstr"/></svg><svg class="v"><use href="#rtrim"/></svg><svg class="v"><use href="#rext"/></svg><svg class="v"><use href="#rbrk"/></svg><svg class="v"><use href="#rbrk2"/></svg><svg class="v"><use href="#rjoin"/></svg><svg class="v"><use href="#rcham"/></svg><svg class="v"><use href="#rfil"/></svg><svg class="v"><use href="#rblend"/></svg><svg class="v"><use href="#rexp"/></svg>
    </div>
  </aside>
</main>
<footer class="status">
  <span class="stab on">模型</span><span class="stab">布局1</span><span class="stab plus">+</span>
  <div class="sg coords">1545133, -179688, 0</div>
  <div class="sg mdl">模型</div>
  <div class="sg"><svg class="i"><use href="#grid"/></svg><svg class="i"><use href="#dots"/></svg><svg class="c"><use href="#caret"/></svg></div>
  <div class="sg">
    <svg class="i"><use href="#infer"/></svg><svg class="i act"><use href="#dyn"/></svg><svg class="i"><use href="#ortho"/></svg><svg class="i"><use href="#polar"/></svg><svg class="c"><use href="#caret"/></svg><svg class="i"><use href="#osnap"/></svg><svg class="c"><use href="#caret"/></svg><svg class="i"><use href="#otrk"/></svg><svg class="i act"><use href="#dynin"/></svg><svg class="c"><use href="#caret"/></svg>
  </div>
  <div class="sg"><svg class="i"><use href="#lwt"/></svg><svg class="i act"><use href="#transp"/></svg><svg class="i"><use href="#qsel"/></svg><svg class="i"><use href="#cyc"/></svg><svg class="c"><use href="#caret"/></svg></div>
  <div class="sg"><svg class="i"><use href="#axes"/></svg><svg class="i"><use href="#gizmo"/></svg><svg class="c"><use href="#caret"/></svg><svg class="i act"><use href="#box3d"/></svg><svg class="c"><use href="#caret"/></svg></div>
  <div class="sg"><svg class="i act"><use href="#anno"/></svg><svg class="i"><use href="#anno2"/></svg><svg class="i"><use href="#anno3"/></svg><span class="scale">1:1 / 100%</span><svg class="c"><use href="#caret"/></svg></div>
  <div class="sg"><svg class="i"><use href="#gear"/></svg><svg class="c"><use href="#caret"/></svg></div>
  <div class="sg"><svg class="i"><use href="#plus"/></svg></div>
  <div class="sg"><svg class="i"><use href="#ruler"/></svg><span class="unit">小数</span><svg class="c"><use href="#caret"/></svg></div>
  <div class="sg"><svg class="i"><use href="#prop2"/></svg></div>
  <div class="sg"><svg class="i"><use href="#lockui"/></svg><svg class="c"><use href="#caret"/></svg><svg class="i"><use href="#iso"/></svg><svg class="i act"><use href="#perf"/></svg><svg class="i"><use href="#chk"/></svg></div>
  <div class="sg"><svg class="i"><use href="#clean"/></svg><svg class="i"><use href="#menu"/></svg></div>
</footer>
<div class="bottomline"></div>

<svg class="overlay" viewBox="0 0 1600 1333" aria-hidden="true">
  <text class="wm" transform="translate(25 385) rotate(-45)" textLength="372">知末网www.znzmo.com</text>
  <text class="wm" transform="translate(568 385) rotate(-45)" textLength="372">知末网www.znzmo.com</text>
  <text class="wm" transform="translate(1118 385) rotate(-45)" textLength="372">知末网www.znzmo.com</text>
  <text class="wm" transform="translate(-125 745) rotate(-45)" textLength="372">知末网www.znzmo.com</text>
  <text class="wm" transform="translate(427 745) rotate(-45)" textLength="372">知末网www.znzmo.com</text>
  <text class="wm" transform="translate(970 745) rotate(-45)" textLength="372">知末网www.znzmo.com</text>
  <text class="wm" transform="translate(1520 745) rotate(-45)" textLength="372">知末网www.znzmo.com</text>
  <text class="wm" transform="translate(265 1112) rotate(-45)" textLength="390">知末网www.znzmo.com</text>
  <text class="wm" transform="translate(815 1112) rotate(-45)" textLength="390">知末网www.znzmo.com</text>
  <text class="wm" transform="translate(1365 1112) rotate(-45)" textLength="390">知末网www.znzmo.com</text>
  <text class="brand" x="1407" y="1257" textLength="124">知末</text>
  <text class="idt" x="1361" y="1305" textLength="224">ID: 1173560551</text>
</svg>
<script src="script.js"></script>
</body>
</html>
```
FILE: styles.css
```css
*{box-sizing:border-box}
html,body{margin:0;padding:0}
body{width:1600px;height:1333px;overflow:hidden;position:relative;display:flex;flex-direction:column;background:#3b4455;font-family:"Liberation Sans","Noto Sans CJK SC",sans-serif;font-size:12px;color:#c4c9d2}
.defs{position:absolute;width:0;height:0}
.topline,.bottomline{height:2px;flex:none;background:#0a8fd8}
.titlebar{height:26px;flex:none;display:flex;align-items:center;padding-left:8px;background:#3c4556}
.logo{width:36px;display:flex;align-items:center}
.lg{width:18px;height:22px}
.c{width:12px;height:20px;flex:none}
.i{width:22.4px;height:20px;flex:none}
.q{width:23.4px}
.dim{opacity:.5;width:20px}
.qat{width:306px;height:23px;display:flex;align-items:center;padding-left:4px;background:#232a36}
.wide{margin-left:3px}
.shr{margin-left:3px}
.sharetx{color:#b5d6f0;font-size:12px;margin-left:1px}
.doctitle{width:475px;margin-left:210px;display:flex;gap:15px;color:#858d9c;font-size:12.5px}
.dwg{font-size:12px}
.hub{width:432px;height:23px;display:flex;align-items:center;background:#232a36;color:#d8dbe0}
.hubarrow{width:0;height:0;margin:0 6px 0 4px;border-left:4px solid #ddd;border-top:4px solid transparent;border-bottom:4px solid transparent}
.hubsearch{width:174px;height:20px;margin-right:1px;padding-left:3px;line-height:20px;background:#3c4556;color:#9aa2ae;font-style:italic;font-size:12px}
.hubs{margin-left:3px}
.hubuser{font-size:12.500px;white-space:nowrap;margin-left:1px}
.hubgap{margin-left:4px}
.hub .sep{height:17px;margin:0 5px 0 3px;background:#4e5766}
.hlp{width:17px;height:17px;flex:none;border-radius:50%;background:#bfc3ca;color:#343c4c;font-weight:700;font-size:13px;line-height:17px;text-align:center}
.tbh{margin:0 3px}
.wins{display:flex;align-items:center;margin-left:auto;gap:11px;padding-right:10px;color:#d5d8dd}
.wins .min,.docwins .min{font-size:14px;line-height:12px}
.wins .min{margin-right:4px}
.max{width:11px;height:11px;border:1px solid #d5d8dd;border-top-width:2px}
.cls{font-size:15px}
.menubar{height:19px;flex:none;display:flex;align-items:center;gap:22.500px;padding-left:17px;background:#434c5e;color:#b8bec9;font-size:12px}
.docwins{display:flex;align-items:center;gap:9px;margin-left:auto;padding-right:5px;color:#d5d8dd}
.docwins .min{margin-right:1px}
.rest{width:10px;height:10px;border:1px solid #d5d8dd;box-shadow:2px -2px 0 -1px #d5d8dd}
.tabstrip{height:25px;flex:none;display:flex;align-items:flex-end;gap:2px;padding-left:25px;background:#1f2632;border-top:1px solid #2c3340}
.tab{height:21px;line-height:22px;width:118px;padding-left:9px;background:#323a4a;border-radius:6px 6px 0 0;color:#a3aab6}
.tab.on{width:130px;background:#3c4556;color:#e6e8ec;font-weight:700;display:flex;align-items:center;white-space:nowrap}
.tabx{margin-left:6px;font-size:16px;color:#aeb4be;font-weight:400}
.tab.add{width:20px;margin-left:2px;padding-left:6px;font-size:15px;height:18px;line-height:18px;margin-bottom:2px;font-weight:700}
.tools{height:57px;flex:none;padding-top:5px;background:#3b4455;display:flex;flex-direction:column;gap:3px}
.row{display:flex;height:23px;align-items:center}
.r1{padding-left:6px}
.r2{padding-left:8px}
.tb{display:flex;align-items:center;height:23px;background:#343c4c;border:1px solid #2a303d}
.t1{width:625px;padding-left:3px;margin-right:4px}
.t1 .c{width:14px}
.t2{width:387px;padding-left:3px}
.t3{width:72px;padding-left:5px}
.t4{width:624px;padding-left:5px}
.t5{width:476px;margin-left:2px;padding-left:3px}
.sh{margin-left:5px}
.grip{width:3px;height:17px;margin-right:1px;background:repeating-linear-gradient(0deg,#8d94a3 0 1px,transparent 1px 2px);flex:none}
.grip.solo{margin:0 2px 0 4px}
.sep{width:1px;height:18px;margin:0 2px;background:#aab0bb;flex:none}
.combo{height:21px;display:flex;align-items:center;background:#fff;color:#222;position:relative;flex:none;font-size:12.500px}
.chev{width:12px;height:12px;margin-left:auto;margin-right:3px;flex:none}
.ch{fill:none;stroke:#888;stroke-width:1.200}
.layerc{width:292px;padding-left:1px}
.li{width:18px;height:18px;flex:none}
.zero{margin-left:3px}
.c1{width:146px;margin-right:6px;padding-left:1px}
.c1 span{margin-left:2px}
.c2{width:154px;margin-right:7px;padding-left:5px}
.c3{width:121px;margin-right:6px;padding-left:5px}
.c4{width:116px;margin-right:0;padding-left:11px}
.ln{width:60px;height:2px;background:#555;flex:none;margin-right:6px}
.c3 .ln{width:35px;margin-right:5px}
.axis{width:115px;padding-left:19px;margin-left:1px}
.work{height:1173px;flex:none;display:flex}
.dock{flex:none;background:#3b4455}
.dl{width:32px;padding:1px 0 0 4px}
.dr{width:35px;padding:1px 0 0 5px}
.vtb{width:23px;display:flex;flex-direction:column;background:#363e4e;border:1px solid #2a303d}
.vgrip{height:8px;flex:none;background:repeating-linear-gradient(90deg,#8d94a3 0 1px,transparent 1px 2px) center/14px 2px no-repeat}
.v{width:21px;height:21.3px;flex:none;padding:1px}
.va{font-size:19px;line-height:21px;text-align:center;color:#dfe2e7;padding:0}
.canvas{width:1533px;height:1172px;background:#000;position:relative;overflow:hidden}
.cad{display:block;width:1533px;height:1172px}
.vcube{position:absolute;left:1393px;top:21px;width:118px;height:118px;display:flex;align-items:center;justify-content:center}
.ring{position:absolute;inset:0;border:14px solid #292929;border-radius:50%}
.face{position:relative;width:50px;height:50px;display:flex;align-items:center;justify-content:center;background:#a6a6a6;border:1px solid #777}
.inner{width:32px;height:32px;background:#8c8c8c;color:#6a6a6a;font-size:30px;line-height:32px;text-align:center}
.dir{position:absolute;color:#8b8b8b;font-size:18px;line-height:18px}
.n{left:50px;top:-2px}.s{left:50px;top:107px}.w{left:-4px;top:50px}.e{left:104px;top:50px}
.wcs{position:absolute;left:1429px;top:165px;width:46px;height:17px;padding-left:3px;background:#77777f;border:1px solid #5b5b63;border-radius:4px;color:#444;font-size:11px;line-height:15px}
.wcsc{position:absolute;right:4px;top:5px;border-top:5px solid #999;border-left:4px solid transparent;border-right:4px solid transparent}
.history{position:absolute;left:296px;top:1090px;display:flex;flex-direction:column;align-items:flex-start;gap:5px;font-family:"Liberation Mono","Noto Sans CJK SC",monospace;font-size:12px;color:#c9c9c9}
.history span{height:14.500px;line-height:14.500px;padding:0 1px;white-space:pre;background:rgba(92,92,92,.92);border-radius:2px}
.cmd{position:absolute;left:236px;top:1147px;width:1061px;height:25px;display:flex}
.cmdl{width:54px;height:100%;display:flex;align-items:center;background:rgba(44,52,66,.92);border-left:1px solid #a00}
.cgrip{width:5px;height:16px;margin:0 5px 0 4px;background:repeating-linear-gradient(0deg,#aaa 0 1px,transparent 1px 2px)}
.cx{color:#cfd2d8;font-size:13px}
.cw{width:18px;height:18px;margin-left:6px}
.cmdi{flex:1;display:flex;align-items:center;padding-left:2px;background:rgba(184,184,184,.94);border-radius:3px 0 0 3px;position:relative}
.ct{width:16px;height:16px}
.c.dk .fw{fill:#444}
.dk{width:10px}
.ph{margin-left:7px;color:#7b7b7b;font-style:italic;font-size:13.500px}
.up{position:absolute;right:4px;top:10px;border-bottom:5px solid #666;border-left:4px solid transparent;border-right:4px solid transparent}
.status{height:29px;flex:none;display:flex;align-items:flex-start;gap:3px;padding:1px 0 0 25px;background:#1f2632}
.status .i{width:24px}
.status .c{width:14px;height:24px}
.status svg{height:24px}
.stab{height:22px;line-height:19px;color:#aeb4be;background:#2d3443;border-radius:0 0 6px 6px;text-align:center;width:36px;margin-top:-1px}
.stab.on{background:#3c4556;color:#f2f2f2;font-weight:700}
.stab:nth-child(2){width:46px}
.stab.plus{width:20px;margin:-1px 0 0 4px;font-size:15px;height:18px;line-height:16px}
.sg{height:24px;display:flex;align-items:center;background:#3b4455;color:#dcdfe4;flex:none}
.coords{width:136px;margin-left:290px;padding-right:6px;justify-content:flex-end;font-size:11.500px}
.mdl{width:28px;justify-content:center}
.act{background:#5b8fc7}
.scale{width:60px;font-size:11.500px;white-space:nowrap;text-align:right}
.unit{width:54px;padding-left:4px}
.overlay{position:absolute;left:0;top:0;width:1600px;height:1333px;pointer-events:none}
.wm{font-size:34px;font-weight:700;fill:rgba(255,255,255,.11);stroke:rgba(255,255,255,.05);stroke-width:5;paint-order:stroke;font-family:"Liberation Sans","Noto Sans CJK SC",sans-serif}
.brand{font-size:62px;font-weight:700;fill:rgba(215,215,215,.88);font-family:"Noto Sans CJK SC",sans-serif}
.idt{font-size:32px;fill:#fff;stroke:#fff;stroke-width:.5;font-family:"Liberation Sans",sans-serif}
.fw{fill:#dfe2e7}.fg{fill:#a9aeb7}.fk{fill:#343c4c}.fk2{fill:#2d6ca8}.fb{fill:#5db2ec}.fbl{fill:#79c3f2}.fo{fill:#f0a53a}.fy{fill:#f8c24a}.fr{fill:#f06a6a}.fgr{fill:#6fd68c}.fred{fill:#c8282b}.fbd{fill:#4f88c4}
.l,.bl,.k,.gr,.o,.x,.d,.da,.mk,.mk2,.lo,.l2,.l3,.tk,.x2,.grw,.dash,.dot2{fill:none;stroke-width:1.300}
.l{stroke:#d6d9df}.l2{stroke:#dfe2e7;stroke-width:2}.l3{stroke:#dfe2e7;stroke-width:3}.bl{stroke:#5db2ec}.k{stroke:#343c4c;stroke-width:1}.gr{stroke:#47c76a;stroke-width:1.800}.grw{stroke:#47c76a;stroke-width:2}.o{stroke:#f0a53a}.x{stroke:#e14b4b;stroke-width:2}.x2{stroke:#d05050}.d{stroke:#343c4c}.da{stroke:#9aa0aa;stroke-dasharray:2 2}.mk{stroke:#666}.mk2{stroke:#222;stroke-width:1.500}.lo{stroke:#f0a53a;stroke-width:1.800}.tk{stroke:#333}
.dash{stroke:#d6d9df;stroke-width:2;stroke-dasharray:2 3}
.dot2{stroke:#dfe2e7;stroke-width:3;stroke-linecap:round}
.dot{fill:#5db2ec}
.gearc{fill:#dfe2e7;stroke:none}.gearl{stroke:#dfe2e7;stroke-width:3;fill:none}.gearh{fill:#3b4455}
.cl{fill:none;stroke-width:1.600}
.red{stroke:#d80000;stroke-dasharray:28 6 5 6;stroke-dashoffset:3}
.redh{stroke:#d80000;stroke-dasharray:47 5 10 5}
.reds{stroke:#d80000}
.grn{stroke:#00d400;stroke-width:1.400}
.grx{stroke:#00e000;stroke-width:1.900}
.grnb{stroke:#00e000;stroke-width:2.500}
.yel{stroke:#f4f400;stroke-width:2}
.yelb{stroke:#f4f400;stroke-width:2.400}
.gdot{fill:#00e000}
.fr1{fill:none;stroke:#b4b4b4;stroke-width:1.200}
.fr2{fill:none;stroke:#f5f5f5;stroke-width:2.500}
.ucs{fill:none;stroke:#cfcfcf;stroke-width:1}
.bub{fill:#000;stroke:#00c800;stroke-width:1.500}
.wline{fill:none;stroke:#d8d8d8;stroke-width:1.200}
.tx{fill:#d8d8d8;font-family:"Liberation Sans",sans-serif;text-anchor:middle;dominant-baseline:central}
.txg{fill:#00e000;font-family:"Liberation Sans",sans-serif;text-anchor:middle;dominant-baseline:central}
.txs{font-family:"Liberation Serif",serif;fill:#eee;text-anchor:middle;dominant-baseline:central}
.ttl{fill:#e4e4e4;font-family:"Noto Sans CJK SC",sans-serif;text-anchor:middle;dominant-baseline:central;font-weight:300}
```
FILE: script.js
```js
const svg = document.getElementById('cad');
const NS = 'http://www.w3.org/2000/svg';

function el(tag, attrs, text) {
  const n = document.createElementNS(NS, tag);
  for (const k in attrs) n.setAttribute(k, attrs[k]);
  if (text !== undefined) n.textContent = text;
  svg.appendChild(n);
  return n;
}
function line(x1, y1, x2, y2, cls) { return el('line', { x1, y1, x2, y2, class: 'cl ' + cls }); }
function txt(x, y, s, size, len, cls, rot) {
  const a = { x, y, 'font-size': size, class: cls || 'tx' };
  if (len) { a.textLength = len; a.lengthAdjust = 'spacingAndGlyphs'; }
  if (rot) a.transform = 'rotate(' + rot + ' ' + x + ' ' + y + ')';
  return el('text', a, s);
}
const small = (x, y, s) => txt(x, y, s, 10, s.length * 5, 'tx');

/* title block frames */
el('rect', { x: 117.5, y: 543.5, width: 1332, height: 900, class: 'fr1' });
el('rect', { x: 128, y: 588, width: 1311, height: 900, class: 'fr2' });

/* plan view */
const cols = [271.7, 338.7, 406, 473.2, 540.7, 608.3, 686.3, 765, 843.5, 922, 1000.7, 1079, 1158, 1236, 1315, 1393.5];
const rows = { D: 703.3, C: 770.3, B: 837.7, A: 905 };

cols.forEach(x => {
  line(x, 681, x, 927, 'red');
  line(x, 927, x, 995, 'grn');
});
line(250, rows.D, 1416, rows.D, 'redh');
line(250, rows.A, 1416, rows.A, 'redh');
[rows.C, rows.B].forEach(y => {
  [[250, 295], [586, 631], [977, 1023], [1370, 1416]].forEach(p => line(p[0], y, p[1], y, 'reds'));
});

/* row axes */
Object.keys(rows).forEach(k => {
  const y = rows[k];
  line(199, y, 250, y, 'grn');
  el('circle', { cx: 190, cy: y, r: 9.3, class: 'bub' });
  txt(190, y, k, 16, 0, 'txs');
  el('circle', { cx: 232.3, cy: y, r: 1.8, class: 'gdot' });
});
line(214.3, rows.D, 214.3, rows.A, 'grn');
line(232.3, rows.D, 232.3, rows.A, 'grn');
el('circle', { cx: 214.3, cy: rows.D, r: 1.8, class: 'gdot' });
el('circle', { cx: 214.3, cy: rows.A, r: 1.8, class: 'gdot' });
[737, 804, 871].forEach(y => txt(226, y, '6000', 10, 18, 'tx', -90));
txt(207.7, 804, '18000', 10, 20, 'tx', -90);

/* bracing bars and labels */
const bays = [[0, 1, 'ZC1'], [4, 5, 'ZC1'], [9, 10, 'ZC2'], [14, 15, 'ZC2']];
bays.forEach(b => {
  const x1 = cols[b[0]] + 3, x2 = cols[b[1]] - 3, m = (x1 + x2) / 2;
  line(x1, 707.7, x2, 707.7, 'grnb');
  line(x1, 900.3, x2, 900.3, 'grnb');
  txt(m, 700.6, b[2], 10, 14, 'tx');
  txt(m, 893, b[2], 10, 14, 'tx');
});

/* columns */
const ibeam = (x, y, w, h) => {
  el('path', { d: 'M' + (x - w) + ' ' + (y - h) + 'h' + 2 * w + 'M' + (x - w) + ' ' + (y + h) + 'h' + 2 * w + 'M' + x + ' ' + (y - h) + 'v' + 2 * h, class: 'cl yelb' });
};
const hbeam = (x, y) => {
  el('path', { d: 'M' + (x - 4) + ' ' + (y - 2.5) + 'v5M' + (x + 4) + ' ' + (y - 2.5) + 'v5M' + (x - 4) + ' ' + y + 'h8', class: 'cl yelb' });
};
cols.forEach((x, i) => {
  ibeam(x, 707.7, 2.8, 4.8);
  ibeam(x, 900.3, 2.8, 4.8);
  const leftD = i === 4 || i === 9 || i === 14;
  if (i === 0) { small(x - 8, 716.5, 'Z1'); small(x - 8, 892, 'Z1'); }
  else if (i === 5 || i === 10) { small(x - 9, 714, 'Z1'); small(x - 9, 892.5, 'Z1'); }
  else if (leftD) { small(x - 9, 711, 'Z1'); small(x - 9, 897, 'Z1'); }
  else { small(x + 9, 711, 'Z1'); small(x + 9, 897, 'Z1'); }
});
[rows.C, rows.B].forEach(y => {
  hbeam(272.6, y);
  hbeam(1392, y);
  ibeam(608.3, y, 2.4, 3.2);
  ibeam(1000.7, y, 2.4, 3.2);
  small(280.6, y - 8, 'Z2');
  small(616.5, y - 8, 'Z3');
  small(1008.5, y - 8, 'Z3');
  small(1385, y - 8, 'Z2');
});

/* horizontal dimensions */
line(268, 961, 1395, 961, 'grn');
line(268, 979.3, 1395, 979.3, 'grn');
cols.forEach(x => el('circle', { cx: x, cy: 961, r: 1.8, class: 'gdot' }));
el('circle', { cx: cols[0], cy: 979.3, r: 1.8, class: 'gdot' });
el('circle', { cx: cols[15], cy: 979.3, r: 1.8, class: 'gdot' });
[305, 372, 439.7, 507, 574].forEach(x => txt(x, 955, '6000', 10, 18));
[648, 726, 804, 883, 961, 1040, 1119, 1197, 1275, 1354].forEach(x => txt(x, 955, '7000', 10, 17));
txt(831.6, 972, '100000', 10, 24);

/* column bubbles */
cols.forEach((x, i) => {
  el('circle', { cx: x, cy: 1003.7, r: 9.3, class: 'bub' });
  const s = String(i + 1);
  txt(x, 1004, s, 16, s.length > 1 ? 12 : 13, 'tx');
});

/* drawing title */
txt(829.5, 1036, '柱及柱间支撑平面布置图', 17, 0, 'ttl');
line(727, 1050.7, 929, 1050.7, 'grnb');
line(727, 1055, 929, 1055, 'grn');

/* elevation view */
const ex1 = [266.3, 334, 401, 468.4, 536.2];
const ex2 = [603.6, 682, 760, 838.3, 916.8, 995.4, 1074, 1152.5, 1231, 1309.7, 1388];
line(266, 1167, 545, 1167, 'redh');
line(266, 1206, 1412, 1206, 'redh');
line(266, 1275, 1412, 1275, 'redh');
ex1.forEach(x => { line(x, 1149, x, 1167, 'reds'); line(x, 1275, x, 1300, 'reds'); line(x, 1167, x, 1275, 'yel'); });
ex2.forEach(x => { line(x, 1196, x, 1206, 'reds'); line(x, 1275, x, 1300, 'reds'); line(x, 1206, x, 1275, 'yel'); });
[[269, 332.5, 1168], [471, 534, 1168], [919.5, 993, 1208], [1312, 1386, 1208]].forEach(p => {
  line(p[0], p[2], p[1], 1274, 'grx');
  line(p[1], p[2], p[0], 1274, 'grx');
});
[[260, 1237], [327, 1237], [394, 1237], [462, 1237], [530, 1237], [610, 1237], [675, 1238], [753, 1238], [832, 1238], [911, 1238], [990, 1238], [1067, 1238], [1146, 1238], [1225, 1238], [1304, 1238], [1382, 1238]].forEach(p => small(p[0], p[1], 'Z1'));
txt(301, 1203, 'ZC1', 10, 14);
txt(502, 1203, 'ZC1', 10, 14);
txt(957, 1228, 'ZC2', 10, 14);
txt(1349, 1228, 'ZC2', 10, 14);
[['9.500', 1167, 24], ['6.000', 1206, 24], ['-0.150', 1275, 29]].forEach(l => {
  const y = l[1];
  txt(188, y - 14, l[0], 14, l[2], 'txg');
  line(172, y - 7, 215, y - 7, 'grn');
  el('path', { d: 'M199 ' + (y - 7) + 'L206 ' + y + 'L213 ' + (y - 7), class: 'cl grn' });
  line(192, y, 266, y, 'grn');
  el('circle', { cx: 223, cy: y, r: 1.6, class: 'gdot' });
  el('circle', { cx: 241, cy: y, r: 1.6, class: 'gdot' });
});
line(223, 1167, 223, 1275, 'grn');
line(241, 1167, 241, 1275, 'grn');
txt(234, 1186, '3500', 10, 17, 'tx', -90);
txt(234, 1240, '6150', 10, 17, 'tx', -90);
txt(216, 1225, '9650', 10, 17, 'tx', -90);

/* detail callouts */
el('ellipse', { cx: 334, cy: 1170, rx: 13, ry: 7, class: 'wline' });
el('ellipse', { cx: 334, cy: 1275, rx: 13, ry: 7, class: 'wline' });
line(340, 1166, 353, 1149, 'ucs');
el('circle', { cx: 369.4, cy: 1149, r: 10, class: 'wline' });
line(359.4, 1149, 379.4, 1149, 'ucs');
line(364, 1154, 375, 1154, 'ucs');
txt(369.4, 1143.5, '1', 10, 0, 'tx');
el('rect', { x: 352, y: 1254, width: 28, height: 6, class: 'wline' });

/* UCS icon */
txt(67, 1214, 'Y', 16, 0, 'tx');
el('path', { d: 'M60 1224V1273H109', class: 'ucs' });
el('rect', { x: 56, y: 1269.5, width: 8, height: 8, class: 'ucs' });
txt(119, 1266, 'X', 16, 0, 'tx');
```
